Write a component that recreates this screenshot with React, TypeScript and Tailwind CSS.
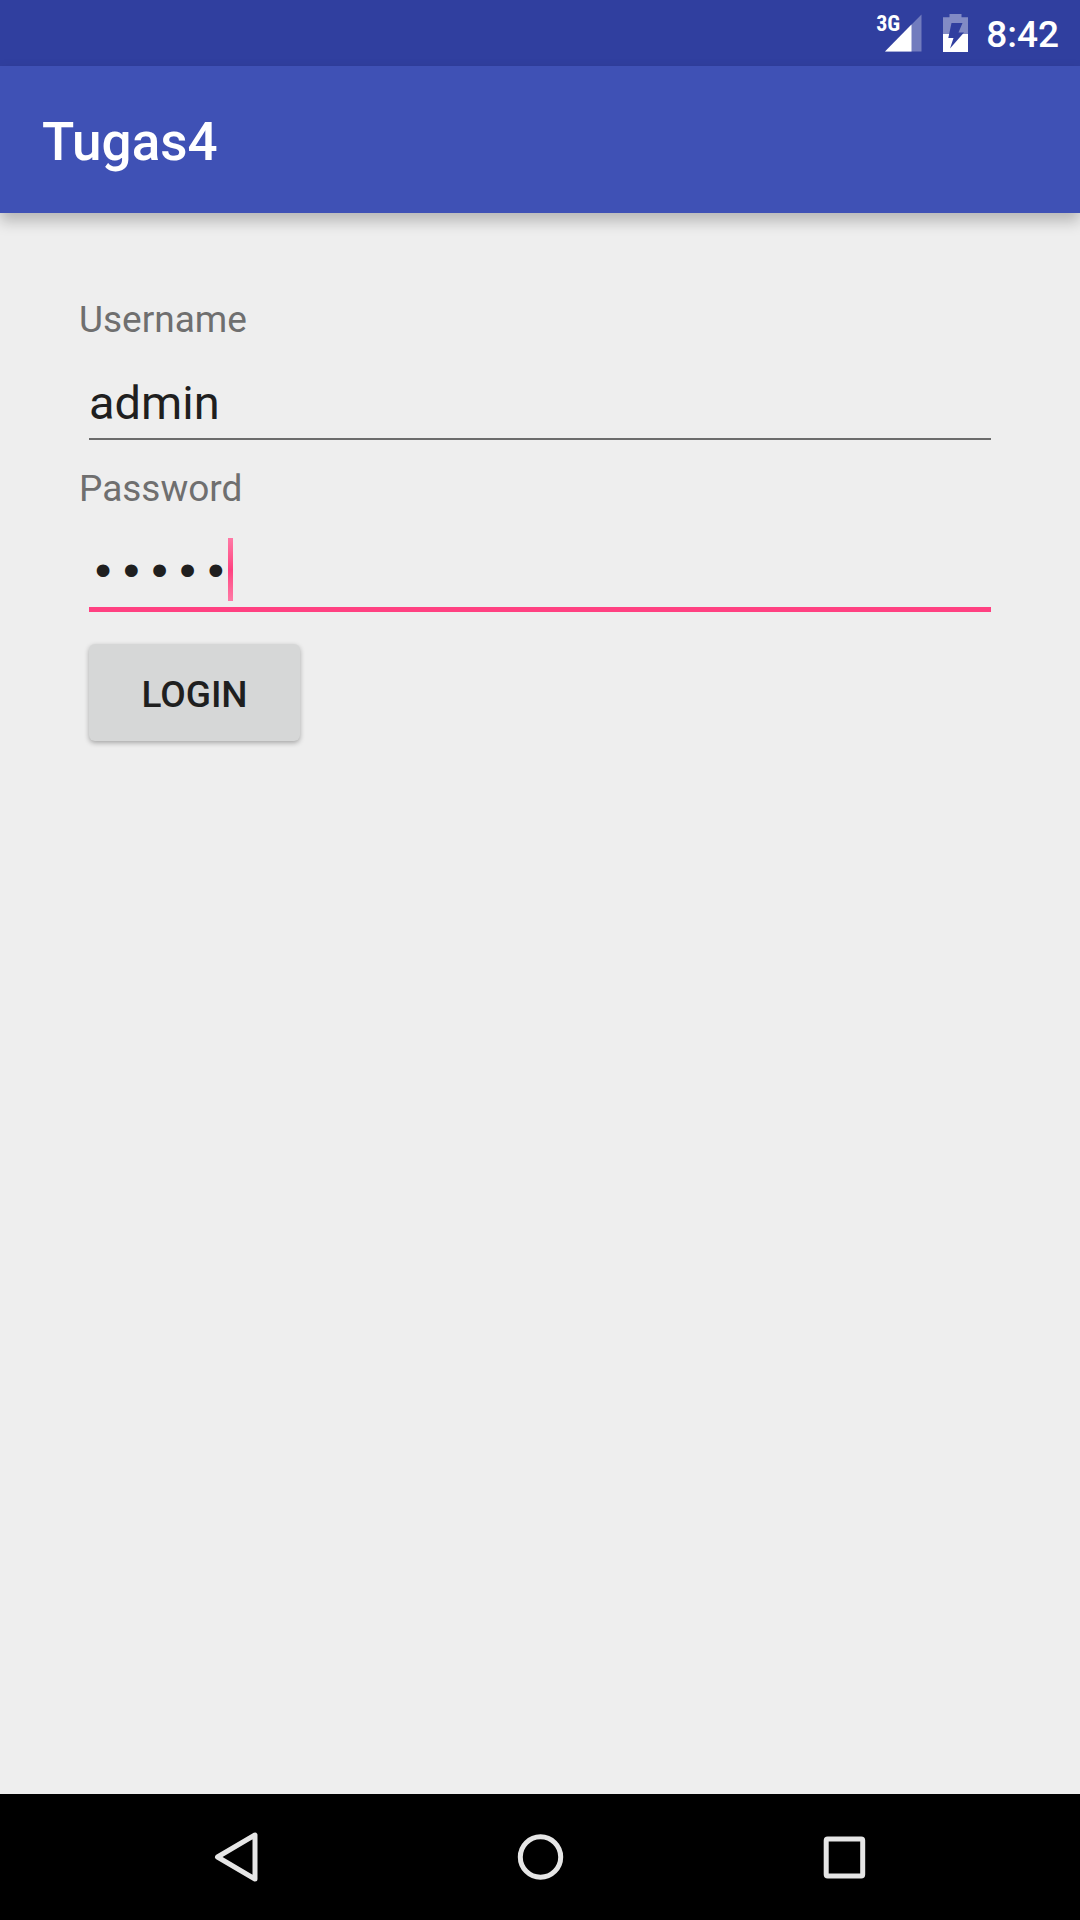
import React from "react";

function SignalIcon() {
  return (
    <svg viewBox="0 0 37 38" className="block h-[38px] w-[37px]" aria-hidden="true">
      <path d="M0 37.5 36.5 0.5V37.5Z" fill="#fff" fillOpacity="0.32" />
      <path d="M0 37.5 26.5 10.6V37.5Z" fill="#fff" />
    </svg>
  );
}

function BatteryIcon() {
  return (
    <svg viewBox="0 0 25 38" className="block h-[38px] w-[25px]" aria-hidden="true">
      <path d="M6.5 0H18.5V3.3H25V20H0V3.3H6.5Z" fill="#fff" fillOpacity="0.4" />
      <path d="M0 20H25V38H0Z" fill="#fff" />
      <path d="M8.5 9H19.5L15.5 18.5H21L7 34.5L10.5 24H5.3Z" fill="#303f9f" />
    </svg>
  );
}

function StatusBar() {
  return (
    <div className="flex h-[66px] shrink-0 items-center justify-end bg-[#303f9f] pr-[21px] text-white">
      <div className="relative mr-[21px]">
        <SignalIcon />
        <span className="absolute top-0 -left-[9px] font-['Roboto_Condensed','Liberation_Sans_Narrow',sans-serif] text-[22px] leading-[20px] font-bold">
          3G
        </span>
      </div>
      <BatteryIcon />
      <time className="mt-[2px] ml-[18px] text-[37px] leading-[43px] font-medium">8:42</time>
    </div>
  );
}

const inputClass = "block h-[55px] w-full bg-transparent text-[47px] leading-[55px] text-[#1f1f1f] outline-none";

function LoginForm() {
  return (
    <form className="px-[79px] pt-[82px]" onSubmit={(e) => e.preventDefault()}>
      <label htmlFor="username" className="block text-[37px] leading-[50px] text-[#6f6f6f]">
        Username
      </label>
      <div className="mx-[10px] mb-[24px] border-b-2 border-[#6b6b6b] pt-[30px] pb-[8px]">
        <input id="username" type="text" defaultValue="admin" className={inputClass} />
      </div>
      <label htmlFor="password" className="block text-[37px] leading-[50px] text-[#6f6f6f]">
        Password
      </label>
      <div className="relative mx-[10px] border-b-5 border-[#ff4081] pt-[32px] pb-[6px]">
        <input
          id="password"
          type="password"
          defaultValue="admin"
          className={`${inputClass} font-['Liberation_Mono',monospace]`}
        />
        <span className="absolute bottom-[6px] left-[139px] h-[63px] w-[5px] bg-linear-to-b from-[#ff79a6] via-[#ff4081] to-[#ff79a6]" />
      </div>
      <button
        type="submit"
        className="mt-[32px] ml-[10px] h-[97px] min-w-[211px] rounded-[6px] bg-[#d6d7d7] px-[21px] pt-[3px] text-[37px] leading-[43px] font-medium text-[#1f1f1f] uppercase shadow-[0_2px_5px_rgba(0,0,0,0.3)]"
      >
        Login
      </button>
    </form>
  );
}

function NavigationBar() {
  return (
    <nav className="flex h-[126px] shrink-0 items-center justify-center bg-black text-[#e6e6e6]">
      <button type="button" aria-label="Back" className="flex h-full w-[304px] items-center justify-center">
        <svg viewBox="0 0 50 50" className="h-[50px] w-[50px]" fill="none" stroke="currentColor" strokeWidth="5" strokeLinejoin="round">
          <path d="M6.5 25 44 3V47Z" />
        </svg>
      </button>
      <button type="button" aria-label="Home" className="flex h-full w-[304px] items-center justify-center">
        <svg viewBox="0 0 50 50" className="h-[50px] w-[50px]" fill="none" stroke="currentColor" strokeWidth="5">
          <circle cx="25.5" cy="25" r="20.2" />
        </svg>
      </button>
      <button type="button" aria-label="Recent apps" className="flex h-full w-[304px] items-center justify-center">
        <svg viewBox="0 0 50 50" className="h-[50px] w-[50px]" fill="none" stroke="currentColor" strokeWidth="5" strokeLinejoin="round">
          <rect x="7.2" y="7" width="36.5" height="37" rx="1.5" />
        </svg>
      </button>
    </nav>
  );
}

export default function App() {
  return (
    <div className="flex min-h-screen flex-col bg-[#eeeeee] font-['Roboto',sans-serif]">
      <StatusBar />
      <header className="flex h-[147px] shrink-0 items-center bg-[#3f51b5] px-[42px] pt-[4px] shadow-[0_8px_14px_rgba(0,0,0,0.24)]">
        <h1 className="text-[53px] leading-[62px] font-medium text-white">Tugas4</h1>
      </header>
      <main className="grow">
        <LoginForm />
      </main>
      <NavigationBar />
    </div>
  );
}
